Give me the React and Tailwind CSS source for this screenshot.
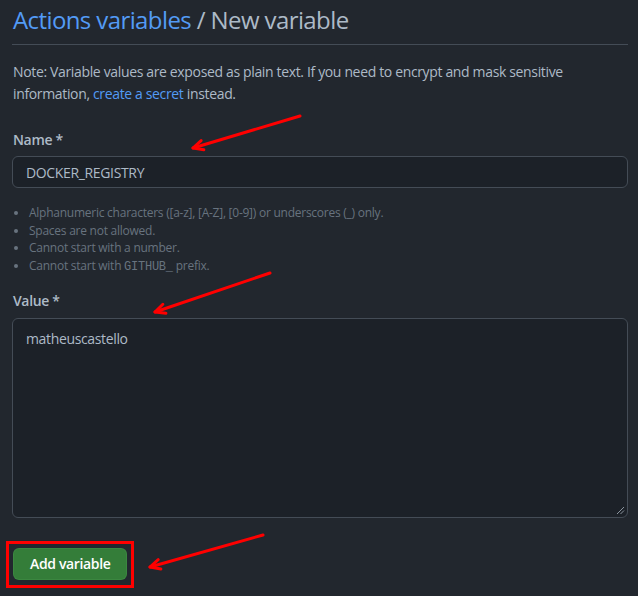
import React from 'react';

const rules = [
  'Alphanumeric characters ([a-z], [A-Z], [0-9]) or underscores (_) only.',
  'Spaces are not allowed.',
  'Cannot start with a number.',
];

const Arrow = ({ x1, y1, x2, y2 }) => {
  const angle = Math.atan2(y1 - y2, x1 - x2);
  const len = 11;
  const spread = 0.45;
  const ax = x2 + len * Math.cos(angle + spread);
  const ay = y2 + len * Math.sin(angle + spread);
  const bx = x2 + len * Math.cos(angle - spread);
  const by = y2 + len * Math.sin(angle - spread);
  return (
    <g stroke="#ff0000" strokeWidth="3" strokeLinecap="round" fill="none">
      <line x1={x1} y1={y1} x2={x2} y2={y2} />
      <polyline points={`${ax},${ay} ${x2},${y2} ${bx},${by}`} strokeLinejoin="round" />
    </g>
  );
};

const App = () => {
  return (
    <div className="relative min-h-[596px] w-[638px] bg-[#22272e] text-[#adbac7] font-['Open_Sans',sans-serif] tracking-[-0.35px]">
      <div className="pl-3 pr-[10px] pt-[5px]">
        <div className="border-b border-[#444c56] pb-[9px]">
          <h2 className="pl-px text-[24px] leading-[30px] tracking-[-0.6px]">
            <span className="text-[#539bf5]">Actions variables</span> / New variable
          </h2>
        </div>

        <p className="mt-4 pl-px text-[14px] leading-[22px]">
          Note: Variable values are exposed as plain text. If you need to encrypt and mask sensitive information,{' '}
          <span className="text-[#539bf5]">create a secret</span> instead.
        </p>

        <div className="mt-[25px]">
          <label className="block pl-px text-[14px] font-semibold leading-5">Name *</label>
          <div className="mt-[6px] flex h-[32px] items-center rounded-md border border-[#444c56] bg-[#1c2128] px-[13px] text-[14px]">
            DOCKER_REGISTRY
          </div>
          <ul className="mt-4 list-disc pl-[17px] text-[12px] leading-[17.7px] tracking-[-0.25px] text-[#68737f]">
            {rules.map((r) => (
              <li key={r}>{r}</li>
            ))}
            <li>
              Cannot start with <span className="font-['Liberation_Mono',monospace] text-[12px] leading-none">GITHUB_</span> prefix.
            </li>
          </ul>
        </div>

        <div className="mt-4">
          <label className="block pl-px text-[14px] font-semibold leading-5">Value *</label>
          <div className="relative mt-[7px] h-[200px] rounded-md border border-[#444c56] bg-[#1c2128] px-[13px] py-[9px] text-[14px]">
            matheuscastello
            <svg className="absolute bottom-[2px] right-[2px]" width="9" height="9" viewBox="0 0 9 9">
              <path d="M8 1 L1 8 M8 4.5 L4.5 8" stroke="#8b949e" strokeWidth="1" />
            </svg>
          </div>
        </div>

        <div className="relative ml-px mt-[30px] inline-block">
          <button className="h-[32px] rounded-md border border-[#46954a]/40 bg-[#347d39] px-4 text-[14px] font-semibold text-white">
            Add variable
          </button>
          <div className="pointer-events-none absolute -bottom-2 -left-[7px] -right-[7px] -top-[7px] border-[3px] border-[#ff0000]" />
        </div>
      </div>

      <svg className="pointer-events-none absolute left-0 top-0" width="638" height="596">
        <Arrow x1={300} y1={116} x2={193} y2={148} />
        <Arrow x1={270} y1={273} x2={155} y2={312} />
        <Arrow x1={263} y1={535} x2={150} y2={567} />
      </svg>
    </div>
  );
};

export default App;
